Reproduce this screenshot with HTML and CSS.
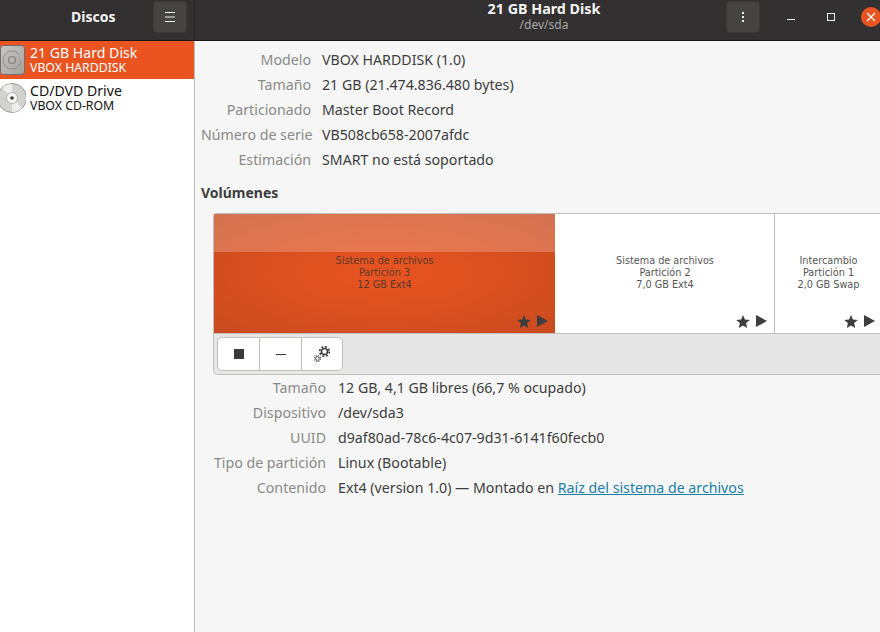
FILE: index.html
```html
<!DOCTYPE html>
<html lang="es">
<head>
  <meta charset="UTF-8" />
  <title>Discos</title>
  <link rel="stylesheet" href="styles.css">
</head>
<body>

  <header class="titlebar">
    <div class="title-left">
      <span class="app-name">Discos</span>
      <button class="head-btn menu-btn">
        <svg width="12" height="10" viewBox="0 0 12 10"><path d="M1 .5h10M1 5h10M1 9.500h10" stroke="#eee" stroke-width="1" fill="none"/></svg>
      </button>
    </div>
    <div class="title-main">
      <div class="title-text">
        <div class="disk-title">21 GB Hard Disk</div>
        <div class="disk-sub">/dev/sda</div>
      </div>
      <button class="head-btn dots-btn">
        <svg width="4" height="12" viewBox="0 0 4 12"><path d="M1 1h2v2H1zM1 5h2v2H1zM1 9h2v2H1z" fill="#eee"/></svg>
      </button>
      <div class="win-controls">
        <svg class="win-min" width="10" height="10" viewBox="0 0 10 10"><path d="M1 7.500h8" stroke="#eee" fill="none"/></svg>
        <svg class="win-max" width="10" height="10" viewBox="0 0 10 10"><rect x="1.500" y="1.500" width="7" height="7" stroke="#eee" fill="none"/></svg>
        <span class="win-close">
          <svg width="10" height="10" viewBox="0 0 10 10"><path d="M1 1l8 8M9 1l-8 8" stroke="#fff" stroke-width="1.300" fill="none"/></svg>
        </span>
      </div>
    </div>
  </header>

  <div class="content">
    <aside class="sidebar">
      <div class="drive selected">
        <svg class="drive-icon" width="26" height="30" viewBox="0 0 26 30">
          <defs>
            <linearGradient id="hddFill" x1="0" y1="0" x2="1" y2="1">
              <stop offset="0" stop-color="#c9c7c4"/>
              <stop offset="1" stop-color="#a5a3a0"/>
            </linearGradient>
          </defs>
          <rect x="0.500" y="0.500" width="24" height="29" rx="3" fill="url(#hddFill)" stroke="#6f6d6b"/>
          <path d="M19.500 10A9 9 0 1 0 21 16" fill="none" stroke="#8e8c89"/>
          <circle cx="12" cy="15" r="3.500" fill="none" stroke="#838180" stroke-width="1.200"/>
        </svg>
        <div>
          <div class="drive-name">21 GB Hard Disk</div>
          <div class="drive-model">VBOX HARDDISK</div>
        </div>
      </div>
      <div class="drive">
        <svg class="drive-icon" width="26" height="30" viewBox="0 0 26 30">
          <circle cx="12" cy="15" r="14.500" fill="#d2d2d0" stroke="#9a9a98"/>
          <path d="M12 15L2 5A14 14 0 0 1 12 1zM12 15l10 10a14 14 0 0 1-10 4z" fill="#eeeeed"/>
          <circle cx="12" cy="15" r="5.500" fill="#f6f6f5" stroke="#b4b4b2"/>
          <circle cx="12" cy="15" r="1.800" fill="#3d3d3d"/>
        </svg>
        <div>
          <div class="drive-name">CD/DVD Drive</div>
          <div class="drive-model">VBOX CD-ROM</div>
        </div>
      </div>
    </aside>

    <main class="details">
      <dl class="info disk-info">
        <dt>Modelo</dt><dd>VBOX HARDDISK (1.0)</dd>
        <dt>Tamaño</dt><dd>21 GB (21.474.836.480 bytes)</dd>
        <dt>Particionado</dt><dd>Master Boot Record</dd>
        <dt>Número de serie</dt><dd>VB508cb658-2007afdc</dd>
        <dt>Estimación</dt><dd>SMART no está soportado</dd>
      </dl>

      <h2 class="section-title">Volúmenes</h2>

      <section class="volumes">
        <div class="partitions">
          <div class="part part-3 active">
            <div class="part-label">Sistema de archivos<br>Partición 3<br>12 GB Ext4</div>
            <div class="part-icons">
              <svg width="14" height="13" viewBox="0 0 14 13"><path d="M7 0l1.900 4.500 4.900.4-3.700 3.200 1.100 4.800L7 10.400l-4.200 2.500 1.100-4.800L.2 4.900l4.900-.4z" fill="#3d3d3d"/></svg>
              <svg width="11" height="12" viewBox="0 0 11 12"><path d="M0 0l11 6-11 6z" fill="#3d3d3d"/></svg>
            </div>
          </div>
          <div class="part part-2">
            <div class="part-label">Sistema de archivos<br>Partición 2<br>7,0 GB Ext4</div>
            <div class="part-icons">
              <svg width="14" height="13" viewBox="0 0 14 13"><path d="M7 0l1.900 4.500 4.900.4-3.700 3.200 1.100 4.800L7 10.400l-4.200 2.500 1.100-4.800L.2 4.900l4.900-.4z" fill="#3d3d3d"/></svg>
              <svg width="11" height="12" viewBox="0 0 11 12"><path d="M0 0l11 6-11 6z" fill="#3d3d3d"/></svg>
            </div>
          </div>
          <div class="part part-1">
            <div class="part-label">Intercambio<br>Partición 1<br>2,0 GB Swap</div>
            <div class="part-icons">
              <svg width="14" height="13" viewBox="0 0 14 13"><path d="M7 0l1.900 4.500 4.900.4-3.700 3.200 1.100 4.800L7 10.400l-4.200 2.500 1.100-4.800L.2 4.900l4.900-.4z" fill="#3d3d3d"/></svg>
              <svg width="11" height="12" viewBox="0 0 11 12"><path d="M0 0l11 6-11 6z" fill="#3d3d3d"/></svg>
            </div>
          </div>
        </div>
        <div class="vol-toolbar">
          <div class="btn-group">
            <button class="tool-btn"><span class="stop-icon"></span></button>
            <button class="tool-btn"><span class="minus-icon"></span></button>
            <button class="tool-btn">
              <svg width="16" height="16" viewBox="0 0 16 16">
                <circle cx="10.500" cy="5.500" r="3" fill="none" stroke="#3a3a3a" stroke-width="1.500"/>
                <circle cx="10.500" cy="5.500" r="4.800" fill="none" stroke="#3a3a3a" stroke-width="1.600" stroke-dasharray="2 1.770"/>
                <circle cx="3.500" cy="12.500" r="1.800" fill="none" stroke="#555" stroke-width="1"/>
                <circle cx="3.500" cy="12.500" r="3" fill="none" stroke="#555" stroke-width="1.200" stroke-dasharray="1.300 1.050"/>
              </svg>
            </button>
          </div>
        </div>
      </section>

      <dl class="info vol-info">
        <dt>Tamaño</dt><dd>12 GB, 4,1 GB libres (66,7 % ocupado)</dd>
        <dt>Dispositivo</dt><dd>/dev/sda3</dd>
        <dt>UUID</dt><dd>d9af80ad-78c6-4c07-9d31-6141f60fecb0</dd>
        <dt>Tipo de partición</dt><dd>Linux (Bootable)</dd>
        <dt>Contenido</dt><dd>Ext4 (version 1.0) — Montado en <a href="#">Raíz del sistema de archivos</a></dd>
      </dl>
    </main>
  </div>

</body>
</html>
```

FILE: styles.css
```css
:root {
  --head: #323030;
  --bg: #f6f6f6;
  --line: #c0bfbc;
  --text: #3d3d3d;
  --muted: #8a8a87;
  --primary: #e95420;
}

* {
  box-sizing: border-box;
}

html, body {
  height: 100%;
}

body {
  font-family: "Noto Sans", sans-serif;
  font-size: 14.2px;
  color: var(--text);
  background: var(--bg);
  margin: 0;
  overflow: hidden;
  display: flex;
  flex-direction: column;
}

/* header */
.titlebar {
  display: flex;
  height: 41px;
  flex: none;
  background: var(--head);
  border-bottom: 1px solid #171616;
  color: #f4f4f4;
}

.title-left {
  width: 195px;
  flex: none;
  display: flex;
  align-items: flex-start;
  justify-content: space-between;
  border-right: 1px solid #232222;
  padding: 1px 7px 0 71px;
}

.app-name {
  font-weight: 700;
  font-size: 14px;
  line-height: 32px;
}

.head-btn {
  width: 34px;
  height: 32px;
  flex: none;
  background: #454442;
  border: 1px solid #3a3938;
  border-radius: 3px;
  padding: 0;
  display: flex;
  align-items: center;
  justify-content: center;
}

.title-main {
  flex: 1;
  min-width: 0;
  display: flex;
  align-items: flex-start;
  padding-top: 1px;
}

.title-text {
  width: 531px;
  flex: none;
  padding-left: 167px;
  text-align: center;
}

.disk-title {
  font-weight: 700;
  font-size: 14.3px;
  line-height: 16px;
}

.disk-sub {
  font-size: 12px;
  line-height: 15px;
  color: #a9a8a6;
}

.win-controls {
  display: flex;
  align-items: center;
  height: 32px;
  padding-left: 26px;
}

.win-min {
  margin-right: 30px;
}

.win-max {
  margin-right: 25px;
}

.win-close {
  width: 20px;
  height: 20px;
  flex: none;
  border-radius: 50%;
  background: var(--primary);
  display: flex;
  align-items: center;
  justify-content: center;
}

/* sidebar */
.content {
  flex: 1;
  display: flex;
  min-height: 0;
}

.sidebar {
  width: 195px;
  flex: none;
  background: #fff;
  border-right: 1px solid var(--line);
}

.drive {
  height: 38px;
  display: flex;
  align-items: center;
  color: #111;
}

.drive.selected {
  background: var(--primary);
  color: #fff;
}

.drive-icon {
  flex: none;
  margin-right: 4px;
}

.drive-name {
  font-size: 14.1px;
  line-height: 16px;
}

.drive-model {
  font-size: 12.3px;
  line-height: 14px;
}

/* details */
.details {
  flex: 1;
  min-width: 0;
  padding-top: 6px;
}

.info {
  display: grid;
  column-gap: 11px;
  grid-auto-rows: 25px;
  margin: 0;
  line-height: 25px;
}

.info dt {
  text-align: right;
  color: var(--muted);
  white-space: nowrap;
}

.info dd {
  margin: 0;
  white-space: nowrap;
}

.disk-info {
  grid-template-columns: 110px 1fr;
  margin-left: 6px;
}

.vol-info {
  grid-template-columns: 113px 1fr;
  column-gap: 12px;
  margin-left: 18px;
}

.info a {
  color: #1b7fa8;
}

.section-title {
  font-size: 14px;
  font-weight: 700;
  line-height: 20px;
  margin: 11px 0 10px 6px;
}

/* volumes */
.volumes {
  margin-left: 18px;
  border: 1px solid var(--line);
  border-right: none;
  border-radius: 4px 0 0 5px;
  background: #e6e6e6;
}

.partitions {
  display: flex;
  height: 120px;
  border-bottom: 1px solid var(--line);
  background: #fff;
}

.part {
  display: flex;
  flex-direction: column;
  flex: none;
  font-family: "DejaVu Sans", sans-serif;
  font-size: 9.7px;
  line-height: 12px;
  text-align: center;
  color: #555;
  padding: 41px 7px 5px;
  border-right: 1px solid var(--line);
}

.part-3 {
  width: 342px;
}

.part-2 {
  width: 219px;
}

.part-1 {
  width: 107px;
  border-right: none;
}

.part.active {
  color: #5a3a2c;
  border-right-color: #fff;
  background:
    linear-gradient(rgba(255,255,255,0.22) 38px, transparent 38px),
    radial-gradient(ellipse at center, #e95420 0%, #c94b1f 100%);
}

.part-icons {
  margin-top: auto;
  display: flex;
  justify-content: flex-end;
  align-items: center;
  gap: 6px;
  height: 14px;
}

.vol-toolbar {
  height: 40px;
  padding: 3px;
}

.btn-group {
  display: inline-flex;
  height: 34px;
  background: #fff;
  border: 1px solid var(--line);
  border-radius: 5px;
}

.tool-btn {
  width: 42px;
  background: none;
  border: none;
  border-right: 1px solid var(--line);
  padding: 0;
  display: flex;
  align-items: center;
  justify-content: center;
}

.tool-btn:last-child {
  width: 40px;
  border-right: none;
}

.stop-icon {
  width: 10px;
  height: 10px;
  background: #3a3a3a;
}

.minus-icon {
  width: 10px;
  height: 1px;
  background: #3a3a3a;
}
```
